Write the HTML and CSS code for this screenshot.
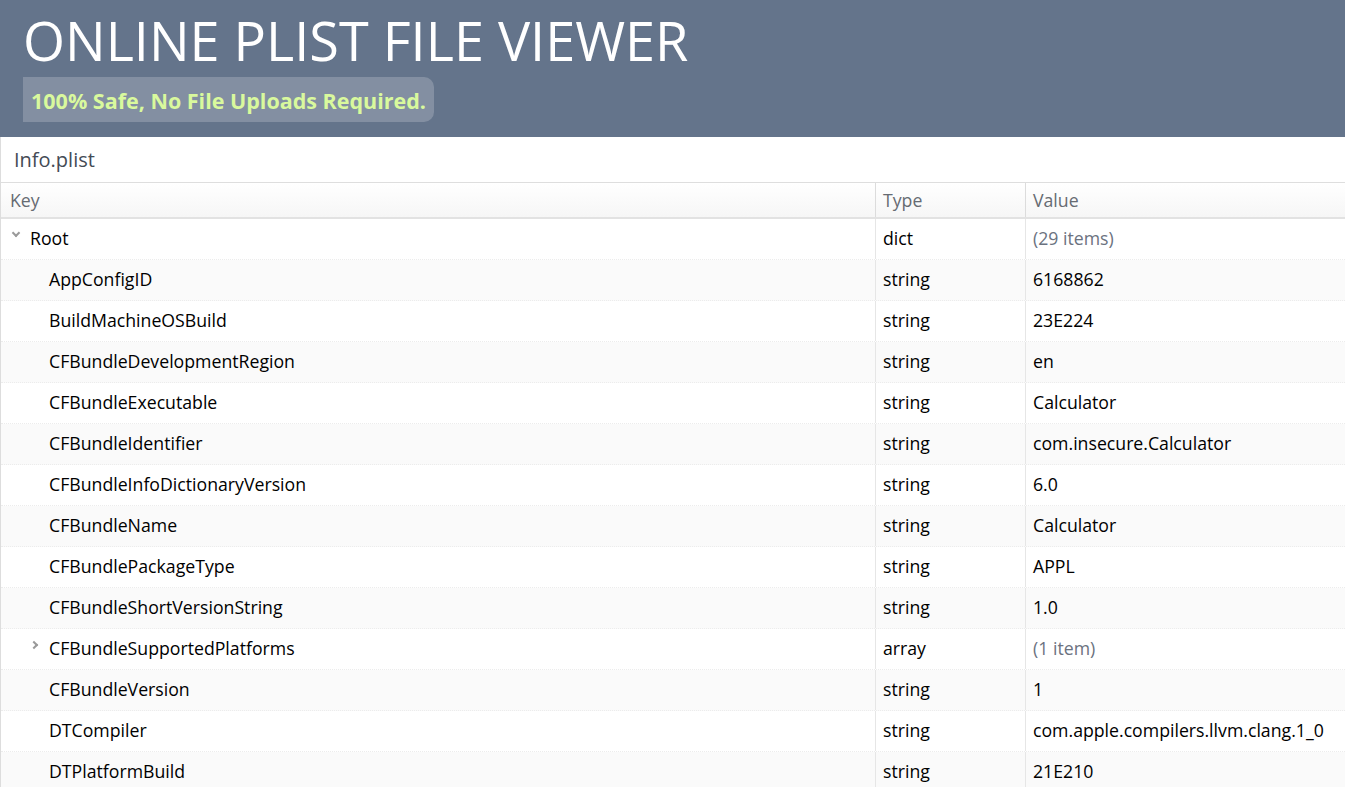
FILE: index.html
```html
<!DOCTYPE html>
<html>
<head>
<meta charset="utf-8">
<link rel="stylesheet" href="styles.css">
</head>
<body>
<header class="hero">
  <h1 class="title">ONLINE PLIST FILE VIEWER</h1>
  <div class="badge">100% Safe, No File Uploads Required.</div>
</header>
<main class="viewer">
  <div class="filename">Info.plist</div>
  <div class="table">
    <div class="row head">
      <div class="cell key">Key</div>
      <div class="cell type">Type</div>
      <div class="cell value">Value</div>
    </div>
    <div class="row">
      <div class="cell key lvl0"><span class="chev down"></span>Root</div>
      <div class="cell type">dict</div>
      <div class="cell value muted">(29 items)</div>
    </div>
    <div class="row alt">
      <div class="cell key lvl1">AppConfigID</div>
      <div class="cell type">string</div>
      <div class="cell value">6168862</div>
    </div>
    <div class="row">
      <div class="cell key lvl1">BuildMachineOSBuild</div>
      <div class="cell type">string</div>
      <div class="cell value">23E224</div>
    </div>
    <div class="row alt">
      <div class="cell key lvl1">CFBundleDevelopmentRegion</div>
      <div class="cell type">string</div>
      <div class="cell value">en</div>
    </div>
    <div class="row">
      <div class="cell key lvl1">CFBundleExecutable</div>
      <div class="cell type">string</div>
      <div class="cell value">Calculator</div>
    </div>
    <div class="row alt">
      <div class="cell key lvl1">CFBundleIdentifier</div>
      <div class="cell type">string</div>
      <div class="cell value">com.insecure.Calculator</div>
    </div>
    <div class="row">
      <div class="cell key lvl1">CFBundleInfoDictionaryVersion</div>
      <div class="cell type">string</div>
      <div class="cell value">6.0</div>
    </div>
    <div class="row alt">
      <div class="cell key lvl1">CFBundleName</div>
      <div class="cell type">string</div>
      <div class="cell value">Calculator</div>
    </div>
    <div class="row">
      <div class="cell key lvl1">CFBundlePackageType</div>
      <div class="cell type">string</div>
      <div class="cell value">APPL</div>
    </div>
    <div class="row alt">
      <div class="cell key lvl1">CFBundleShortVersionString</div>
      <div class="cell type">string</div>
      <div class="cell value">1.0</div>
    </div>
    <div class="row">
      <div class="cell key lvl1"><span class="chev right"></span>CFBundleSupportedPlatforms</div>
      <div class="cell type">array</div>
      <div class="cell value muted">(1 item)</div>
    </div>
    <div class="row alt">
      <div class="cell key lvl1">CFBundleVersion</div>
      <div class="cell type">string</div>
      <div class="cell value">1</div>
    </div>
    <div class="row">
      <div class="cell key lvl1">DTCompiler</div>
      <div class="cell type">string</div>
      <div class="cell value">com.apple.compilers.llvm.clang.1_0</div>
    </div>
    <div class="row alt">
      <div class="cell key lvl1">DTPlatformBuild</div>
      <div class="cell type">string</div>
      <div class="cell value">21E210</div>
    </div>
  </div>
</main>
</body>
</html>
```

FILE: styles.css
```css
* { box-sizing: border-box; }
html, body { margin: 0; padding: 0; }
body {
  font-family: "Open Sans", "Noto Sans", sans-serif;
  background: #ffffff;
  color: #000;
  overflow: hidden;
}
.hero {
  background: #64748b;
  height: 137px;
  padding: 8px 0 0 23px;
}
.title {
  margin: 0;
  font-weight: 400;
  font-size: 54px;
  line-height: 64px;
  color: #fff;
  letter-spacing: 0;
}
.badge {
  display: inline-block;
  margin-top: 5px;
  height: 45px;
  line-height: 47px;
  padding: 0 8px 0 8px;
  background: rgba(255,255,255,0.2);
  border-radius: 0 10px 10px 0;
  color: #d9f99d;
  font-weight: 700;
  font-size: 21.5px;
}
.viewer {
  border-left: 1px solid #dddddd;
}
.filename {
  height: 46px;
  padding: 9px 0 0 13px;
  font-size: 20px;
  color: #444b55;
  border-bottom: 1px solid #dedede;
}
.row {
  display: flex;
  height: 41px;
  border-bottom: 1px dotted #ececec;
  background: #fff;
}
.row.alt { background: #fafafa; }
.row.head {
  height: 36px;
  background: linear-gradient(#ffffff, #f6f6f6);
  border-bottom: 2px solid #e2e2e2;
}
.cell {
  font-size: 17.7px;
  line-height: 39px;
  white-space: nowrap;
  overflow: hidden;
}
.head .cell { color: #666b72; line-height: 34px; }
.key { width: 874px; padding-left: 9px; position: relative; }
.type { width: 150px; padding-left: 7px; border-left: 1px solid #e6e6e6; }
.value { flex: 1; padding-left: 7px; border-left: 1px solid #e6e6e6; }
.head .type, .head .value { border-left: 1px solid #dcdcdc; }
.muted { color: #6b7280; }
.lvl0 { padding-left: 29px; }
.lvl1 { padding-left: 48px; }
.chev {
  position: absolute;
  width: 6px;
  height: 6px;
  border-right: 2px solid #9a9a9a;
  border-bottom: 2px solid #9a9a9a;
}
.chev.down { left: 12px; top: 11px; transform: rotate(45deg); }
.chev.right { left: 30px; top: 13px; transform: rotate(-45deg); }
```
